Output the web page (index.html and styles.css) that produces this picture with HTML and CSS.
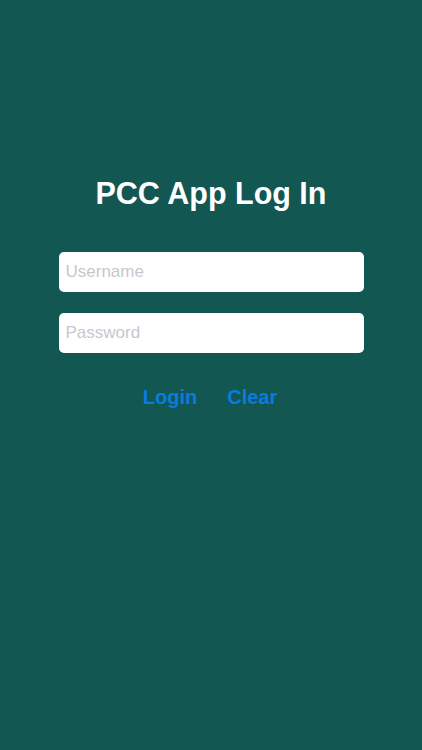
FILE: index.html
```html
<!DOCTYPE html>
<html>
<head>
<meta charset="utf-8">
<link rel="stylesheet" href="styles.css">
</head>
<body>
<main class="screen">
  <h1 class="title">PCC App Log In</h1>
  <form class="form">
    <input class="field" type="text" placeholder="Username">
    <input class="field" type="password" placeholder="Password">
    <div class="actions">
      <button type="button" class="btn">Login</button>
      <button type="button" class="btn">Clear</button>
    </div>
  </form>
</main>
</body>
</html>
```
FILE: styles.css
```css
html, body {
  margin: 0;
  padding: 0;
  height: 100%;
  background: #125752;
}
body {
  font-family: "Liberation Sans", Arial, sans-serif;
}
.screen {
  display: flex;
  flex-direction: column;
  align-items: center;
  padding-top: 175px;
}
.title {
  margin: 0;
  font-size: 30.5px;
  line-height: 36px;
  font-weight: bold;
  color: #ffffff;
}
.form {
  margin-top: 41px;
  display: flex;
  flex-direction: column;
  gap: 21px;
  width: 305px;
}
.field {
  box-sizing: border-box;
  width: 305px;
  height: 40px;
  margin: 0;
  border: none;
  border-radius: 5px;
  background: #ffffff;
  padding: 0 7px;
  font-family: "Liberation Sans", Arial, sans-serif;
  font-size: 17px;
  color: #000;
  outline: none;
}
.field::placeholder {
  color: #c7c7cd;
}
.actions {
  margin-top: 11px;
  padding-right: 2px;
  display: flex;
  justify-content: center;
  gap: 30px;
}
.btn {
  background: none;
  border: none;
  padding: 0;
  margin: 0;
  font-family: "Liberation Sans", Arial, sans-serif;
  font-size: 20px;
  line-height: 24px;
  font-weight: bold;
  color: #0a7be0;
  cursor: pointer;
}
```
